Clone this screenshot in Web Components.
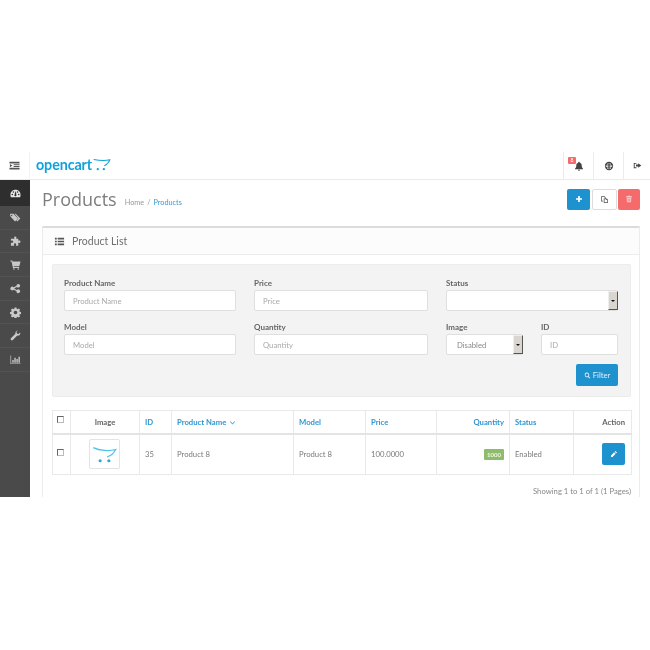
<!DOCTYPE html>
<html lang="en">
<head>
<meta charset="utf-8">
<title>Products</title>
<style>
  html, body { margin: 0; background: #fff; }
  body { font-family: Lato, "Open Sans", sans-serif; font-size: 8px; color: #6d6d6d; }
</style>
</head>
<body>
<oc-page>
  <oc-header slot="header"></oc-header>
  <oc-sidebar slot="sidebar"></oc-sidebar>
  <oc-title-bar></oc-title-bar>
  <oc-panel title="Product List">
    <oc-filter></oc-filter>
    <oc-product-table></oc-product-table>
    <oc-pager>Showing 1 to 1 of 1 (1 Pages)</oc-pager>
  </oc-panel>
</oc-page>

<script>
// icon paths, all on a 24 box
const ICONS = {
    indent: 'M1 4h22v3.500H1zM10 9h13v2.500H10zM10 13h13v2.500H10zM1 17h22v3.500H1zM2 8.500l5.500 3.700L2 16z',
    list: 'M2 4h4v3.500H2zM8 4h14v3.500H8zM2 10.200h4v3.500H2zM8 10.200h14v3.500H8zM2 16.500h4V20H2zM8 16.500h14V20H8z',
    bell: 'M12 2a2 2 0 0 1 2 2c3.500.8 4.500 3.500 4.500 6.500 0 3.500 1 5.500 3 7.500v1.500h-19V18c2-2 3-4 3-7.500 0-3 1-5.700 4.500-6.500a2 2 0 0 1 2-2zM9.500 21h5a2.500 2.500 0 0 1-5 0z',
    globe: 'M12 2a10 10 0 1 0 0 20 10 10 0 0 0 0-20zm-1.500 2.500v4h-4A8 8 0 0 1 10.500 4.500zm3 0a8 8 0 0 1 4 4h-4zM4 12c0-.5 0-1 .2-1.500h6.300v3H4.200C4 13 4 12.500 4 12zm9.500-1.500h6.300a8 8 0 0 1 0 3h-6.300zm-7 5h4v4a8 8 0 0 1-4-4zm7 0h4a8 8 0 0 1-4 4z',
    signout: 'M2 5h7v2.500H4.500v9H9V19H2zM14 6l8 6-8 6v-3.500H8v-5h6z',
    plus: 'M9.500 3h5v6.500H21v5h-6.500V21h-5v-6.500H3v-5h6.500z',
    copy: 'M3 3h9l3 3v3h-2V7.500L11 5H5v10h3v2H3zM10 9h8l3 3v9H10zm2 2v8h7v-6h-2.500v-2z',
    trash: 'M9 2h6l1 2h5v2.500H3V4h5zM5 8h14l-1 14H6zm3 2.500.5 9h1.500l-.5-9zm3.200 0v9h1.600v-9zm3.300 0-.5 9h1.500l.5-9z',
    search: 'M10 2a8 8 0 0 1 6.300 12.900l5.400 5.400-2.400 2.400-5.400-5.400A8 8 0 1 1 10 2zm0 3a5 5 0 1 0 0 10 5 5 0 0 0 0-10z',
    pencil: 'M16.500 3l4.500 4.500-2.500 2.500L14 5.500zM12.500 7l4.500 4.500L7.500 21H3v-4.500z',
    caret: 'M5 8l7 7 7-7 1.800 1.800L12 18.500 3.200 9.800z',
    dashboard: 'M12 4C5.500 4 1 9 1 15c0 1.800.4 3.300 1 5h20c.6-1.700 1-3.200 1-5 0-6-4.500-11-11-11zM5 16a1.800 1.800 0 1 1 0-3.600A1.800 1.800 0 0 1 5 16zm2.500-5.500a1.800 1.800 0 1 1 0-3.600 1.800 1.800 0 0 1 0 3.600zM13.800 17a2.300 2.300 0 0 1-4.100-2L12 7.500h1l1 7.500c.2.700 0 1.400-.2 2zM16.500 10.500a1.800 1.800 0 1 1 0-3.600 1.800 1.800 0 0 1 0 3.600zM19 16a1.800 1.800 0 1 1 0-3.600 1.800 1.800 0 0 1 0 3.600z',
    tags: 'M0 4h7.500l10 10-6.500 6.500L1 10zm3.700 2a1.500 1.500 0 1 0 0 3 1.500 1.500 0 0 0 0-3zM10 4h2.500l10 10-6.500 6.500-2-2 4.500-4.500z',
    puzzle: 'M9 3.500a2.500 2.500 0 0 1 5 0c0 1-.5 1.500-.5 2.500H18v4.500c1 0 1.500-.5 2.500-.5a2.500 2.500 0 0 1 0 5c-1 0-1.500-.5-2.500-.5V21h-5c0-1 .5-1.500.5-2.500a2.500 2.500 0 0 0-5 0c0 1 .5 1.500.5 2.500H2v-6.500c1 0 1.500.5 2.500.5a2.500 2.500 0 0 0 0-5C3.500 10 3 10.500 2 10.500V6h7.500C9.500 5 9 4.500 9 3.500z',
    cart: 'M1 3h4l.7 2.500H23l-2.500 9.500H8l.5 2H20v2.500H6.500L3.300 5.500H1zM8.500 20a1.800 1.800 0 1 1 0 3.600 1.800 1.800 0 0 1 0-3.600zM18 20a1.800 1.800 0 1 1 0 3.600 1.800 1.800 0 0 1 0-3.600z',
    share: 'M18 2a4 4 0 1 1-2.900 6.800l-6.200 3c0 .2 0 .4 0 .4l6.200 3A4 4 0 1 1 14 18v-.3l-6.200-3a4 4 0 1 1 0-5.400l6.200-3V6a4 4 0 0 1 4-4z',
    cog: 'M10 1h4l.6 3 2 .8 2.600-1.700 2.800 2.800-1.700 2.600.8 2 3 .6v4l-3 .6-.8 2 1.700 2.600-2.800 2.800-2.600-1.700-2 .8-.6 3h-4l-.6-3-2-.8-2.600 1.700-2.800-2.800 1.700-2.600-.8-2-3-.6v-4l3-.6.8-2-1.700-2.600 2.800-2.800 2.600 1.700 2-.8zm2 7a4 4 0 1 0 0 8 4 4 0 0 0 0-8z',
    wrench: 'M17 1.500c-3.500 0-6 3-5.200 6.500L2 17.800a3 3 0 0 0 4.200 4.200l9.800-9.800c3.500.8 6.500-1.700 6.500-5.200 0-.7-.1-1.300-.3-1.800l-3.700 3.700-3.400-1 -1-3.400 3.700-3.700c-.5-.2-1.100-.3-1.800-.3z',
    chart: 'M1 3h1.500v17.500H23V22H1zM5 13h3v6H5zM9.500 8h3v11h-3zM14 11h3v8h-3zM18.500 6h3v13h-3z'
};

class OcIcon extends HTMLElement {
    connectedCallback() {
        const name = this.getAttribute('name');
        this.attachShadow({ mode: 'open' });
        this.shadowRoot.innerHTML = `
            <style>
                :host { display: inline-flex; width: var(--size, 10px); height: var(--size, 10px); flex: none; }
                svg { width: 100%; height: 100%; fill: currentColor; display: block; }
            </style>
            <svg viewBox="0 0 24 24"><path d="${ICONS[name]}" fill-rule="evenodd"/></svg>`;
    }
}
customElements.define('oc-icon', OcIcon);

class OcPage extends HTMLElement {
    constructor() {
        super();
        this.attachShadow({ mode: 'open' });
        this.shadowRoot.innerHTML = `
            <style>
                /* the reference is a scaled down shot, so everything is a little soft */
                :host { display: block; margin-top: 152px; height: 345px; overflow: hidden; background: #fff; filter: blur(.3px); }
                .body { display: flex; height: 317px; }
                main { flex: 1; min-width: 0; padding: 0 10px 0 12px; }
            </style>
            <slot name="header"></slot>
            <div class="body">
                <slot name="sidebar"></slot>
                <main><slot></slot></main>
            </div>`;
    }
}
customElements.define('oc-page', OcPage);

class OcHeader extends HTMLElement {
    constructor() {
        super();
        this.attachShadow({ mode: 'open' });
        this.shadowRoot.innerHTML = `
            <style>
                :host { display: flex; align-items: stretch; height: 27px; border-bottom: 1px solid #ebebeb; color: #555; }
                .toggle { width: 29px; border-right: 1px solid #f2f2f2; display: flex; align-items: center; justify-content: center; color: #555; --size: 11px; }
                .logo { display: flex; align-items: center; padding-left: 6px; flex: 1; height: 26px; }
                .logo b { font: 700 14.300px/1 Lato, "Open Sans", sans-serif; color: #10a3db; letter-spacing: -.1px; }
                .logo svg { width: 19px; height: 13px; margin-top: -2px; }
                .tool { width: 29px; border-left: 1px solid #ececec; display: flex; align-items: center; justify-content: center; position: relative; --size: 10px; color: #444; }
                .badge { position: absolute; left: 4px; top: 5px; background: #f56b6b; color: #fff; font-size: 5px; line-height: 7px; padding: 0 2.500px; border-radius: 1px; }
                .tool.last { width: 26px; --size: 9px; }
            </style>
            <div class="toggle"><oc-icon name="indent"></oc-icon></div>
            <div class="logo">
                <b>opencart</b>
                <svg viewBox="0 0 40 28" fill="none">
                    <path d="M3 3c10 2 24 3 35 1-2 6-7 10-12 13" stroke="#10a3db" stroke-width="2.200"/>
                    <circle cx="12" cy="24" r="2.500" fill="#10a3db"/><circle cx="25" cy="24" r="2.500" fill="#10a3db"/>
                </svg>
            </div>
            <div class="tool"><span class="badge">8</span><oc-icon name="bell"></oc-icon></div>
            <div class="tool"><oc-icon name="globe"></oc-icon></div>
            <div class="tool last"><oc-icon name="signout"></oc-icon></div>`;
    }
}
customElements.define('oc-header', OcHeader);

class OcSidebar extends HTMLElement {
    constructor() {
        super();
        this.attachShadow({ mode: 'open' });
        const items = ['dashboard', 'tags', 'puzzle', 'cart', 'share', 'cog', 'wrench', 'chart'];
        this.shadowRoot.innerHTML = `
            <style>
                :host { display: block; width: 30px; flex: none; background: #4a4a4a; color: #c9c9c9; }
                .item { height: 23.700px; display: flex; align-items: center; justify-content: center; border-bottom: 1px solid #525252; box-sizing: border-box; --size: 11px; }
                .item.on { height: 26px; background: #2e2e2e; color: #e8e8e8; border-bottom: 0; }
            </style>
            ${items.map((n, i) => `<div class="item ${i === 0 ? 'on' : ''}"><oc-icon name="${n}"></oc-icon></div>`).join('')}`;
    }
}
customElements.define('oc-sidebar', OcSidebar);

class OcTitleBar extends HTMLElement {
    constructor() {
        super();
        this.attachShadow({ mode: 'open' });
        this.shadowRoot.innerHTML = `
            <style>
                :host { display: flex; align-items: center; height: 46px; padding-bottom: 8px; box-sizing: border-box; }
                h1 { margin: 0; font: 400 18px/1 "Open Sans", sans-serif; color: #7d7d7d; }
                .crumbs { margin-left: 8px; margin-top: 7px; font-size: 7.300px; color: #999; display: flex; gap: 3px; }
                .crumbs span.cur { color: #3a9ad3; }
                .btns { margin-left: auto; display: flex; }
                .btn { width: 23px; height: 21px; border-radius: 2px; display: flex; align-items: center; justify-content: center; box-sizing: border-box; --size: 8px; color: #fff; }
                .add { background: #1e91cf; }
                .copy { width: 25px; margin: 0 1px 0 2px; background: #fff; border: 1px solid #ddd; color: #555; --size: 9px; }
                .del { width: 22px; background: #f56b6b; color: #fbd0d0; }
            </style>
            <h1>Products</h1>
            <div class="crumbs"><span>Home</span><span>/</span><span class="cur">Products</span></div>
            <div class="btns">
                <div class="btn add"><oc-icon name="plus"></oc-icon></div>
                <div class="btn copy"><oc-icon name="copy"></oc-icon></div>
                <div class="btn del"><oc-icon name="trash"></oc-icon></div>
            </div>`;
    }
}
customElements.define('oc-title-bar', OcTitleBar);

class OcPanel extends HTMLElement {
    constructor() {
        super();
        this.attachShadow({ mode: 'open' });
    }
    connectedCallback() {
        // the panel runs on past the bottom of the shot, its lower edge is never seen
        this.shadowRoot.innerHTML = `
            <style>
                :host { display: block; min-height: 300px; border: 1px solid #ececec; border-top: 2px solid #dcdcdc; border-radius: 1px; }
                .head { height: 26px; display: flex; align-items: center; padding-left: 11px; gap: 7px; background: #fcfcfc; border-bottom: 1px solid #ececec; font-size: 10.500px; color: #6f6f6f; --size: 11px; }
                .head oc-icon { color: #555; }
                .body { padding: 9px 8px 0 9px; }
            </style>
            <div class="head"><oc-icon name="list"></oc-icon>${this.getAttribute('title')}</div>
            <div class="body"><slot></slot></div>`;
    }
}
customElements.define('oc-panel', OcPanel);

class OcField extends HTMLElement {
    constructor() {
        super();
        this.attachShadow({ mode: 'open' });
    }
    connectedCallback() {
        const label = this.getAttribute('label');
        const ph = this.getAttribute('placeholder');
        const select = this.hasAttribute('select');
        const value = this.getAttribute('value') || '';
        this.shadowRoot.innerHTML = `
            <style>
                :host { display: block; min-width: 0; }
                label { display: block; height: 12px; font-size: 8px; font-weight: 700; line-height: 10px; color: #666; }
                .box { height: 21px; box-sizing: border-box; background: #fff; border: 1px solid #dfdfdf; border-radius: 2px; display: flex; align-items: center; font-size: 7.700px; color: #aaa; padding-left: 8px; }
                .box.sel { padding-left: 0; color: #888; }
                .val { flex: 1; padding-left: 10px; }
                .arrow { width: 10px; align-self: stretch; margin: 0 -1px 0 0; background: #d9d6cf; border-right: 1px solid #555; border-bottom: 1px solid #555; border-top: 1px solid #eee; border-left: 1px solid #eee; box-sizing: border-box; display: flex; align-items: center; justify-content: center; }
                .arrow i { width: 0; height: 0; border: 2px solid transparent; border-top: 2.500px solid #111; border-bottom: 0; }
            </style>
            <label>${label}</label>
            ${select
                ? `<div class="box sel"><span class="val">${value}</span><span class="arrow"><i></i></span></div>`
                : `<div class="box">${ph}</div>`}`;
    }
}
customElements.define('oc-field', OcField);

class OcFilter extends HTMLElement {
    constructor() {
        super();
        this.attachShadow({ mode: 'open' });
        this.shadowRoot.innerHTML = `
            <style>
                :host { display: block; background: #f3f3f3; border: 1px solid #ececec; border-radius: 2px; padding: 13px 12px 11px 11px; height: 133px; box-sizing: border-box; }
                .grid { display: grid; grid-template-columns: 172px 174px 172px; column-gap: 18px; row-gap: 11px; }
                .pair { display: grid; grid-template-columns: 77px 77px; column-gap: 18px; }
                .foot { display: flex; justify-content: flex-end; margin-top: 9px; }
                .filter { width: 42px; height: 22px; background: #1e91cf; color: #dff0fa; border-radius: 2px; display: flex; align-items: center; justify-content: center; gap: 2px; font-size: 7.700px; --size: 7px; }
            </style>
            <div class="grid">
                <oc-field label="Product Name" placeholder="Product Name"></oc-field>
                <oc-field label="Price" placeholder="Price"></oc-field>
                <oc-field label="Status" select></oc-field>
                <oc-field label="Model" placeholder="Model"></oc-field>
                <oc-field label="Quantity" placeholder="Quantity"></oc-field>
                <div class="pair">
                    <oc-field label="Image" select value="Disabled"></oc-field>
                    <oc-field label="ID" placeholder="ID"></oc-field>
                </div>
            </div>
            <div class="foot"><div class="filter"><oc-icon name="search"></oc-icon>Filter</div></div>`;
    }
}
customElements.define('oc-filter', OcFilter);

class OcProductTable extends HTMLElement {
    constructor() {
        super();
        this.attachShadow({ mode: 'open' });
        this.shadowRoot.innerHTML = `
            <style>
                :host { display: block; margin-top: 13px; }
                table { border-collapse: collapse; table-layout: fixed; width: 579px; font-size: 7.700px; color: #7a7a7a; }
                th, td { border: 1px solid #e9e9e9; padding: 0 5px; text-align: left; }
                td:last-child, th:last-child { padding-right: 6px; }
                thead tr { height: 23px; }
                thead th { border-bottom: 2px solid #e4e4e4; font-weight: 700; color: #666; }
                tbody tr { height: 41px; }
                .link { color: #2f96d0; }
                .c { text-align: center; }
                .r { text-align: right; }
                .check { display: inline-block; width: 7px; height: 7px; margin-left: -2px; box-sizing: border-box; background: #fff; border: 1px solid #666; border-right-color: #bbb; border-bottom-color: #bbb; vertical-align: 2px; }
                .thumb { width: 31px; height: 30px; margin: 0 auto; position: relative; left: -1px; box-sizing: border-box; border: 1px solid #e3e3e3; border-radius: 2px; display: flex; align-items: center; justify-content: center; }
                .thumb svg { width: 25px; height: 19px; }
                .sort { --size: 7px; vertical-align: -1px; margin-left: 1px; }
                .badge { display: inline-block; background: #8fbb6c; color: #eef6e6; font-size: 6px; line-height: 11px; padding: 0 3px; border-radius: 1px; font-weight: 700; }
                .edit { width: 23px; height: 22px; background: #1e91cf; color: #fff; border-radius: 2px; display: flex; align-items: center; justify-content: center; margin-left: auto; --size: 8px; }
            </style>
            <table>
                <colgroup>
                    <col style="width:18px"><col style="width:69px"><col style="width:32px"><col style="width:122px">
                    <col style="width:72px"><col style="width:71px"><col style="width:73px"><col style="width:64px"><col style="width:58px">
                </colgroup>
                <thead>
                    <tr>
                        <th class="c"><span class="check"></span></th>
                        <th class="c">Image</th>
                        <th class="link">ID</th>
                        <th class="link">Product Name <oc-icon class="sort" name="caret"></oc-icon></th>
                        <th class="link">Model</th>
                        <th class="link">Price</th>
                        <th class="link r">Quantity</th>
                        <th class="link">Status</th>
                        <th class="r">Action</th>
                    </tr>
                </thead>
                <tbody>
                    <tr>
                        <td class="c"><span class="check"></span></td>
                        <td><div class="thumb">
                            <svg viewBox="0 0 40 30" fill="none">
                                <path d="M2 4c10 5 26 6 36 3-3 6-8 10-14 12" stroke="#4cc3ea" stroke-width="2"/>
                                <circle cx="13" cy="25" r="2.500" fill="#2aa7d8"/><circle cx="27" cy="25" r="2.500" fill="#2aa7d8"/>
                            </svg>
                        </div></td>
                        <td>35</td>
                        <td>Product 8</td>
                        <td>Product 8</td>
                        <td>100.0000</td>
                        <td class="r"><span class="badge">1000</span></td>
                        <td>Enabled</td>
                        <td><div class="edit"><oc-icon name="pencil"></oc-icon></div></td>
                    </tr>
                </tbody>
            </table>`;
    }
}
customElements.define('oc-product-table', OcProductTable);

class OcPager extends HTMLElement {
    constructor() {
        super();
        this.attachShadow({ mode: 'open' });
        this.shadowRoot.innerHTML = `
            <style>
                :host { display: block; text-align: right; font-size: 7.700px; line-height: 10px; color: #888; margin-top: 11px; }
            </style>
            <slot></slot>`;
    }
}
customElements.define('oc-pager', OcPager);
</script>
</body>
</html>
